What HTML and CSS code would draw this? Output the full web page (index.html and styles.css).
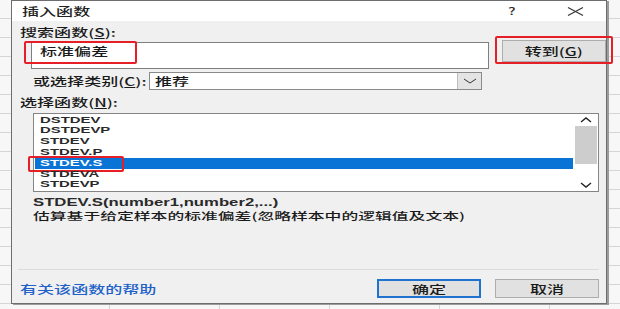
FILE: index.html
```html
<!DOCTYPE html>
<html lang="zh-CN">
<head>
<meta charset="utf-8">
<title>插入函数</title>
<link rel="stylesheet" href="styles.css">
</head>
<body>
<div class="dialog">
  <div class="titlebar">
    <span class="t title">插入函数</span>
    <span class="spacer"></span>
    <span class="t help">?</span>
    <span class="close">
      <svg width="17" height="9" viewBox="0 0 17 9"><path d="M1 0.5 L16 8.5 M16 0.5 L1 8.5" stroke="#333" stroke-width="1.1" fill="none"/></svg>
    </span>
  </div>
  <div class="body">
    <div class="label first"><span class="t">搜索函数(<u>S</u>):</span></div>
    <div class="search-row">
      <div class="input">
        <span class="t">标准偏差</span>
        <div class="mark mark-input"></div>
      </div>
      <div class="go-wrap">
        <div class="btn go"><span class="t c">转到(<u>G</u>)</span></div>
        <div class="mark mark-go"></div>
      </div>
    </div>
    <div class="cat-row">
      <div class="cat-label"><span class="t">或选择类别(<u>C</u>):</span></div>
      <div class="select">
        <span class="t">推荐</span>
        <span class="spacer"></span>
        <span class="drop">
          <svg width="14" height="6" viewBox="0 0 14 6"><path d="M1 1 L7 5 L13 1" stroke="#333" stroke-width="1" fill="none"/></svg>
        </span>
      </div>
    </div>
    <div class="label second"><span class="t">选择函数(<u>N</u>):</span></div>
    <div class="list">
      <div class="items">
        <div class="item"><span class="t">DSTDEV</span></div>
        <div class="item"><span class="t">DSTDEVP</span></div>
        <div class="item"><span class="t">STDEV</span></div>
        <div class="item"><span class="t">STDEV.P</span></div>
        <div class="item sel"><span class="t">STDEV.S</span><div class="mark mark-sel"></div></div>
        <div class="item"><span class="t">STDEVA</span></div>
        <div class="item"><span class="t">STDEVP</span></div>
      </div>
      <div class="scroll">
        <div class="arrow">
          <svg width="12" height="6" viewBox="0 0 12 6"><path d="M1 5 L6 1 L11 5" stroke="#222" stroke-width="1.4" fill="none"/></svg>
        </div>
        <div class="thumb"></div>
        <div class="track"></div>
        <div class="arrow">
          <svg width="12" height="6" viewBox="0 0 12 6"><path d="M1 1 L6 5 L11 1" stroke="#222" stroke-width="1.4" fill="none"/></svg>
        </div>
      </div>
    </div>
    <div class="desc">
      <div class="line sig"><span class="t">STDEV.S(number1,number2,...)</span></div>
      <div class="line info"><span class="t">估算基于给定样本的标准偏差(忽略样本中的逻辑值及文本)</span></div>
    </div>
    <div class="sep"></div>
    <div class="footer">
      <a class="link" href="#"><span class="t">有关该函数的帮助</span></a>
      <span class="spacer"></span>
      <div class="btn ok"><span class="t c">确定</span></div>
      <div class="btn cancel"><span class="t c">取消</span></div>
    </div>
  </div>
</div>
</body>
</html>
```
FILE: styles.css
```css
html, body {
  margin: 0;
  padding: 0;
}
body {
  width: 620px;
  height: 309px;
  overflow: hidden;
  font-family: "Noto Sans CJK SC", "Noto Sans", sans-serif;
  font-size: 11px;
  font-weight: 500;
  color: #1a1a1a;
  background-color: #f7f7f7;
  background-image:
    repeating-linear-gradient(to bottom, transparent 0, transparent 18px, #d6d6d6 18px, #d6d6d6 19px),
    repeating-linear-gradient(to right, transparent 0, transparent 109px, #d6d6d6 109px, #d6d6d6 110px);
  padding-left: 11px;
  box-sizing: border-box;
}
.t {
  display: inline-block;
  white-space: nowrap;
  transform: scaleX(1.55);
  transform-origin: 0 50%;
}
.t.c {
  transform-origin: 50% 50%;
}
.spacer {
  flex: 1;
}
.dialog {
  width: 594px;
  height: 302px;
  border: 1px solid #6d6d6d;
  background: #f0f0f0;
  box-shadow: 2px 1px 0 #9c9c9c;
  position: relative;
}
.titlebar {
  height: 20px;
  background: #ffffff;
  display: flex;
  align-items: center;
  padding-left: 10px;
  line-height: 12px;
}
.title {
  color: #222;
}
.help {
  width: 14px;
  margin-right: 45px;
  color: #333;
  font-size: 10px;
}
.close {
  display: flex;
  margin-right: 22px;
}
.body {
  position: relative;
}
.label {
  height: 12px;
  line-height: 12px;
  padding-left: 8px;
}
.label.first {
  margin-top: 5px;
}
.label.second {
  margin-top: 6px;
}
.search-row {
  display: flex;
  align-items: flex-start;
  height: 30px;
}
.input {
  position: relative;
  margin-top: 4px;
  margin-left: 19px;
  width: 448px;
  height: 24px;
  border: 1px solid #7f7f7f;
  background: #ffffff;
  line-height: 14px;
  padding-left: 8px;
  padding-top: 1px;
  box-sizing: content-box;
}
.input .t {
  transform-origin: 0 0;
}
.mark {
  position: absolute;
  border: 2px solid #e61e25;
  border-radius: 2px;
  pointer-events: none;
}
.mark-input {
  left: -8px;
  top: -2px;
  width: 109px;
  height: 19px;
}
.go-wrap {
  position: relative;
  margin-top: 2px;
  margin-left: 13px;
}
.btn {
  box-sizing: border-box;
  background: #e1e1e1;
  border: 1px solid #adadad;
  display: flex;
  align-items: center;
  justify-content: center;
  line-height: 12px;
}
.go {
  width: 104px;
  height: 22px;
}
.mark-go {
  left: -7px;
  top: -4px;
  width: 114px;
  height: 24px;
}
.cat-row {
  display: flex;
  align-items: center;
  margin-top: 4px;
  height: 18px;
}
.cat-label {
  width: 116px;
  padding-left: 21px;
  line-height: 12px;
}
.select {
  width: 333px;
  height: 18px;
  box-sizing: border-box;
  border: 1px solid #8a8a8a;
  background: #ffffff;
  display: flex;
  align-items: center;
  padding-left: 5px;
  line-height: 12px;
}
.drop {
  width: 23px;
  height: 16px;
  background: #e4e4e4;
  border-left: 1px solid #bcbcbc;
  display: flex;
  align-items: center;
  justify-content: center;
}
.list {
  margin-top: 5px;
  margin-left: 21px;
  width: 566px;
  height: 79px;
  box-sizing: border-box;
  border: 1px solid #858585;
  background: #ffffff;
  display: flex;
}
.items {
  flex: 1;
  padding-top: 0.6px;
  padding-left: 1px;
  padding-right: 2px;
}
.item {
  position: relative;
  height: 10.8px;
  line-height: 10.8px;
  font-family: "Liberation Sans", Arial, sans-serif;
  font-size: 9.2px;
  font-weight: 700;
  padding-left: 5px;
  color: #2a2a2a;
}
.item .t {
  transform: scaleX(1.62);
}
.item.sel {
  background: #0a74d6;
  color: #ffffff;
}
.mark-sel {
  left: -7px;
  top: -2px;
  width: 92px;
  height: 12px;
}
.scroll {
  width: 22px;
  margin-right: 1px;
  display: flex;
  flex-direction: column;
  align-items: stretch;
}
.arrow {
  height: 12px;
  display: flex;
  align-items: center;
  justify-content: center;
}
.thumb {
  height: 38px;
  background: #cdcdcd;
}
.track {
  flex: 1;
}
.desc {
  margin-top: 4.5px;
  padding-left: 21px;
}
.line {
  color: #1a1a1a;
}
.sig {
  height: 12px;
  line-height: 12px;
  font-family: "Liberation Sans", Arial, sans-serif;
  font-size: 10px;
  font-weight: 700;
  color: #2a2a2a;
}
.sig .t {
  transform: scaleX(1.67);
}
.info {
  height: 14px;
  line-height: 14px;
  font-size: 10px;
}
.info .t {
  transform: scaleX(1.68);
}
.sep {
  margin-top: 46.5px;
  margin-left: 6px;
  margin-right: 7px;
  height: 1px;
  background: #dcdcdc;
}
.footer {
  display: flex;
  align-items: center;
  margin-top: 9px;
  padding-left: 8px;
  padding-right: 7px;
}
.link {
  color: #2161c8;
  text-decoration: underline;
  line-height: 12px;
}
.ok, .cancel {
  width: 104px;
  height: 19px;
}
.ok {
  border: 2px solid #1f72d0;
}
.cancel {
  margin-left: 14px;
}
```
